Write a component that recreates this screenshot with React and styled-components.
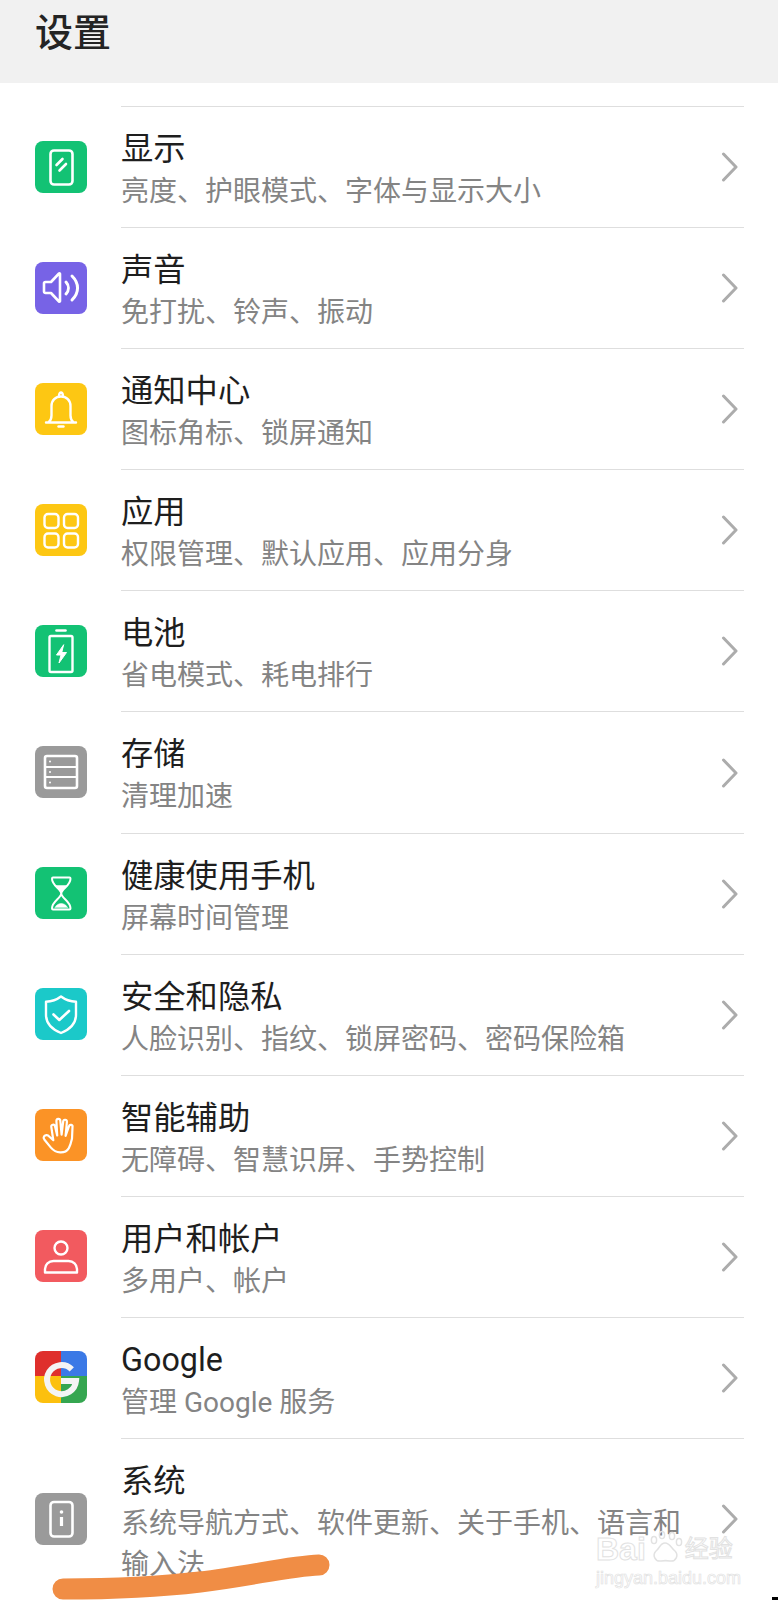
import React from 'react';
import styled, { createGlobalStyle } from 'styled-components';

const Global = createGlobalStyle`
  html, body { margin: 0; padding: 0; background: #fff; }
  body { font-family: Roboto, "Noto Sans CJK SC", sans-serif; }
`;

const Page = styled.div`
  position: relative;
  width: 778px;
  height: 1600px;
  overflow: hidden;
  background: #fff;
`;

const Header = styled.header`
  height: 83px;
  background: #f1f1f1;
  padding: 9px 0 0 35px;
  box-sizing: border-box;
`;

const HeaderTitle = styled.h1`
  margin: 0;
  font-size: 38px;
  line-height: 48px;
  font-weight: 500;
  color: #242424;
`;

const List = styled.ul`
  list-style: none;
  margin: 0;
  padding: 23px 34px 0 34.5px;
`;

const Row = styled.li`
  display: grid;
  grid-template-columns: 52px 1fr;
  column-gap: 34.5px;
  align-items: center;
  min-height: 121.1px;
`;

const IconTile = styled.svg`
  display: block;
  width: 52px;
  height: 52px;
  border-radius: 8px;
  background: ${p => p.$bg};
`;

const Body = styled.div`
  align-self: stretch;
  display: flex;
  align-items: center;
  border-top: 1.5px solid #dedede;
  box-sizing: border-box;
`;

const Texts = styled.div`
  flex: 1;
  min-width: 0;
  align-self: flex-start;
  padding: 21px 0 14px;
  max-width: 570px;
`;

const Title = styled.div`
  font-size: 32.3px;
  line-height: 43px;
  color: #1e1e1e;
`;

const Sub = styled.div`
  font-size: 28px;
  line-height: 41px;
  color: #848484;
`;

const Chevron = styled.svg`
  display: block;
  width: 18px;
  height: 30px;
  margin-left: auto;
  margin-right: 5px;
  flex: none;
  fill: none;
  stroke: #acacac;
  stroke-width: 3;
  stroke-linecap: round;
  stroke-linejoin: round;
`;

const Scribble = styled.svg`
  position: absolute;
  left: 40px;
  top: 1550px;
  width: 300px;
  height: 50px;
  fill: none;
  stroke: #f08d45;
  stroke-width: 21;
  stroke-linecap: round;
`;

const Watermark = styled.div`
  position: absolute;
  left: 596px;
  top: 1533px;
  width: 140px;
  display: flex;
  flex-direction: column;
`;

const MarkTop = styled.div`
  display: flex;
  align-items: center;
  height: 32px;
`;

const MarkWord = styled.span`
  font-family: "Liberation Sans", sans-serif;
  font-weight: 700;
  font-size: 32px;
  line-height: 32px;
  color: transparent;
  -webkit-text-stroke: 1px #e2e2e2;
`;

const MarkPaw = styled.svg`
  width: 38px;
  height: 34px;
  flex: none;
  margin: -4px 1px 0 0;
  fill: none;
  stroke: #e2e2e2;
  stroke-width: 1.5;
`;

const MarkCn = styled.span`
  font-size: 24px;
  line-height: 32px;
  color: transparent;
  -webkit-text-stroke: 1px #e2e2e2;
`;

const MarkUrl = styled.span`
  font-family: "Liberation Sans", sans-serif;
  font-size: 18px;
  line-height: 22px;
  margin-top: 2px;
  color: transparent;
  -webkit-text-stroke: 0.7px #e2e2e2;
`;

const CornerTick = styled.i`
  position: absolute;
  right: 0;
  bottom: 0;
  width: 6px;
  height: 3px;
  background: #000;
`;

const line = { fill: 'none', stroke: '#fff', strokeWidth: 2.4, strokeLinecap: 'round', strokeLinejoin: 'round' };
const thin = { ...line, strokeWidth: 2 };

const glyphs = {
  display: (
    <g {...line}>
      <rect x="15.5" y="9.5" width="22" height="34" rx="3.5" strokeWidth="2.6" />
      <path d="M21.5 24l6-6M24.5 29.5l6.500-6.500" strokeWidth="2.600" />
    </g>
  ),
  sound: (
    <g {...line} strokeWidth="2.600">
      <path d="M9 21.500a1.500 1.500 0 0 1 1.500-1.500H16l8-8.500a.6.6 0 0 1 1 .4v27.200a.6.6 0 0 1-1 .4L16 31h-5.500A1.500 1.500 0 0 1 9 29.500z" />
      <path d="M31 20c3.200 3.600 3.200 8.400 0 12" strokeWidth="3" />
      <path d="M37 14c7.400 7.400 7.400 16.600 0 24" strokeWidth="3" />
    </g>
  ),
  bell: (
    <g {...line}>
      <path d="M11 39.500h30M13.500 39.500c2.200-2 3-4 3-7V23c0-5.500 4-9.500 9.500-9.500s9.500 4 9.500 9.500v9.500c0 3 .8 5 3 7" />
      <path d="M24 12.500c.3-2 1.200-3 2-3s1.700 1 2 3" />
      <path d="M23.500 43.500h5" />
    </g>
  ),
  apps: (
    <g {...thin} strokeWidth="2.400">
      <rect x="9.500" y="10" width="14" height="14" rx="3.500" />
      <rect x="29" y="10" width="14" height="14" rx="3.500" />
      <rect x="9.500" y="29.500" width="14" height="14" rx="3.500" />
      <rect x="29" y="29.500" width="14" height="14" rx="3.500" />
    </g>
  ),
  battery: (
    <g {...line}>
      <path d="M21.500 5.500h9" strokeWidth="2.600" />
      <rect x="14.500" y="11" width="23" height="36" rx="1.500" />
      <path d="M28.500 20l-7 10h4.500l-2 8 7.500-10.500h-4.500z" fill="#fff" strokeWidth="1" />
    </g>
  ),
  storage: (
    <g {...line}>
      <rect x="10" y="10" width="32" height="32" rx="2" strokeWidth="2.600" />
      <path d="M10 21h32M10 31h32" strokeWidth="2" />
      <circle cx="15" cy="15.500" r="1" fill="#fff" stroke="none" />
      <circle cx="15" cy="26" r="1" fill="#fff" stroke="none" />
      <circle cx="15" cy="36.500" r="1" fill="#fff" stroke="none" />
    </g>
  ),
  hourglass: (
    <g {...thin}>
      <path d="M18 10.500h16.500c.8 0 1 .6 1 1.200 0 7-9.200 10.300-9.200 14.800s9.200 7.800 9.200 14.800c0 .6-.2 1.200-1 1.200H18c-.8 0-1-.6-1-1.200 0-7 9.200-10.300 9.200-14.800S17 18.700 17 11.700c0-.6.200-1.200 1-1.200z" />
      <path d="M20.500 18.500h11.500l-5.800 6z" fill="#fff" strokeWidth="0.500" />
      <path d="M20 40.500c1.500-3 4-4 6.200-4s4.800 1 6.300 4z" fill="#fff" strokeWidth="0.500" />
    </g>
  ),
  shield: (
    <g {...line}>
      <path d="M26 8.500c4.500 3.400 10 5 15 5.200v13c0 8.400-5.600 14.500-15 18.300-9.400-3.800-15-9.900-15-18.300v-13c5-.2 10.500-1.800 15-5.200z" />
      <path d="M18.500 26.500l5.800 5.500 9.700-9" strokeWidth="2.600" />
    </g>
  ),
  hand: (
    <g {...thin} strokeWidth="2.200">
      <path d="M9 27.500c1.500-2 3.800-1.500 5.500.2l3.800 3.500-2-13.200c-.4-2.500 3-3.300 3.700-.8l2.200 9.300-.8-14.500c-.1-2.700 3.600-3 3.900-.3l1.300 14 1.600-13.200c.3-2.600 3.900-2.200 3.700.4l-1.300 14 3.400-9.800c.8-2.300 4-1.300 3.500 1L37 29.500c-.9 4-1.400 6.800-3.300 9.800-1.500 2.400-4.500 4.200-8.500 4-4.500-.2-7-2-9.300-4.700L9.500 30.800c-.8-1-1.200-2.300-.5-3.300z" />
    </g>
  ),
  user: (
    <g {...line}>
      <circle cx="26" cy="18" r="6.500" />
      <path d="M10 42.500v-3.500c0-4.500 3.700-8 8.500-8h15c4.800 0 8.500 3.500 8.500 8v3.500z" />
    </g>
  ),
  google: (
    <g>
      <rect x="0" y="0" width="26" height="25" fill="#df2f2c" />
      <rect x="26" y="0" width="26" height="25" fill="#3b79e6" />
      <rect x="0" y="25" width="26" height="27" fill="#fcc00e" />
      <rect x="26" y="25" width="26" height="27" fill="#35a650" />
      <path d="M36.800 18.300A14.500 14.500 0 1 0 41 30H26" fill="none" stroke="#f4f4f4" strokeWidth="6" />
    </g>
  ),
  system: (
    <g {...line}>
      <rect x="15.500" y="9" width="22" height="34.500" rx="3.500" strokeWidth="2.600" />
      <circle cx="26.500" cy="19" r="1.800" fill="#fff" stroke="none" />
      <path d="M26.500 24v9" strokeWidth="3.200" strokeLinecap="butt" />
    </g>
  ),
};

const rows = [
  { icon: 'display', bg: '#13c274', title: '显示', sub: '亮度、护眼模式、字体与显示大小' },
  { icon: 'sound', bg: '#7763e6', title: '声音', sub: '免打扰、铃声、振动' },
  { icon: 'bell', bg: '#fdc713', title: '通知中心', sub: '图标角标、锁屏通知' },
  { icon: 'apps', bg: '#fdc713', title: '应用', sub: '权限管理、默认应用、应用分身' },
  { icon: 'battery', bg: '#13c274', title: '电池', sub: '省电模式、耗电排行' },
  { icon: 'storage', bg: '#9a9a9a', title: '存储', sub: '清理加速' },
  { icon: 'hourglass', bg: '#13c274', title: '健康使用手机', sub: '屏幕时间管理' },
  { icon: 'shield', bg: '#1bc9c9', title: '安全和隐私', sub: '人脸识别、指纹、锁屏密码、密码保险箱' },
  { icon: 'hand', bg: '#fb9326', title: '智能辅助', sub: '无障碍、智慧识屏、手势控制' },
  { icon: 'user', bg: '#f25a5f', title: '用户和帐户', sub: '多用户、帐户' },
  { icon: 'google', bg: '#fff', title: 'Google', sub: '管理 Google 服务' },
  { icon: 'system', bg: '#9a9a9a', title: '系统', sub: '系统导航方式、软件更新、关于手机、语言和输入法' },
];

export default function App() {
  return (
    <Page>
      <Global />
      <Header>
        <HeaderTitle>设置</HeaderTitle>
      </Header>
      <List>
        {rows.map(r => (
          <Row key={r.title}>
            <IconTile $bg={r.bg} viewBox="0 0 52 52" aria-hidden="true">
              {glyphs[r.icon]}
            </IconTile>
            <Body>
              <Texts>
                <Title>{r.title}</Title>
                <Sub>{r.sub}</Sub>
              </Texts>
              <Chevron viewBox="0 0 18 30" aria-hidden="true">
                <path d="M2.500 2l12.500 13L2.500 28" />
              </Chevron>
            </Body>
          </Row>
        ))}
      </List>
      <Watermark>
        <MarkTop>
          <MarkWord>Bai</MarkWord>
          <MarkPaw viewBox="0 0 38 34" aria-hidden="true">
            <ellipse cx="8" cy="10" rx="2.600" ry="3.600" />
            <ellipse cx="16" cy="5" rx="2.600" ry="3.600" />
            <ellipse cx="26" cy="6" rx="2.600" ry="3.600" />
            <ellipse cx="33" cy="12" rx="2.600" ry="3.600" />
            <path d="M19 13c5 0 6 5 10 8 4 4 1 11-5 10-3-.5-6-.5-9 0-6 1-9-6-5-10 4-3 4-8 9-8z" />
          </MarkPaw>
          <MarkCn>经验</MarkCn>
        </MarkTop>
        <MarkUrl>jingyan.baidu.com</MarkUrl>
      </Watermark>
      <Scribble viewBox="0 0 300 50" aria-hidden="true">
        <path d="M23 39C60 39 110 38 160 32S250 16 279 15" />
      </Scribble>
      <CornerTick />
    </Page>
  );
}
